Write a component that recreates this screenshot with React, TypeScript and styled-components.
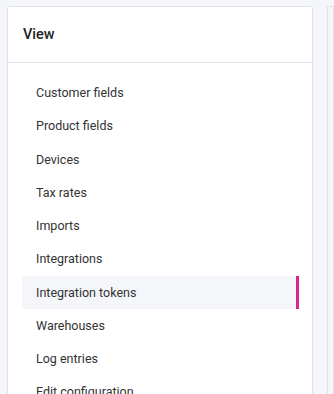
import React from "react";
import styled, { createGlobalStyle } from "styled-components";

const Global = createGlobalStyle`
  html, body { margin: 0; padding: 0; background: #f5f6fa; }
  body { font-family: Roboto, "Noto Sans", sans-serif; color: #333; }
  * { box-sizing: border-box; }
`;

const Page = styled.div`
  display: flex;
  gap: 14px;
  padding: 6px 0 0 7px;
  height: 394px;
  overflow: hidden;
`;

const Card = styled.div`
  width: 306px;
  flex: none;
  background: #fff;
  border: 1px solid #e3e4e8;
  border-radius: 2px;
  height: 420px;
`;

const SideCard = styled.div`
  flex: 1;
  background: #f5f6fa;
  border: 1px solid #e3e4e8;
  height: 420px;
`;

const Header = styled.div`
  height: 56px;
  display: flex;
  align-items: center;
  padding: 0 15px;
  border-bottom: 1px solid #e3e4e8;
  font-size: 14.5px;
  font-weight: 500;
  color: #222;
`;

const List = styled.ul`
  list-style: none;
  margin: 0;
  padding: 13px 13px 0 14px;
`;

const Item = styled.li<{ $active?: boolean }>`
  height: 33.25px;
  display: flex;
  align-items: center;
  padding-left: 14px;
  font-size: 12.5px;
  color: #333;
  background: ${(p) => (p.$active ? "#f5f6fa" : "transparent")};
  border-right: 3px solid ${(p) => (p.$active ? "#dd2590" : "transparent")};
`;

const items = [
  "Customer fields",
  "Product fields",
  "Devices",
  "Tax rates",
  "Imports",
  "Integrations",
  "Integration tokens",
  "Warehouses",
  "Log entries",
  "Edit configuration",
];

export default function App() {
  return (
    <>
      <Global />
      <Page>
        <Card>
          <Header>View</Header>
          <List>
            {items.map((t) => (
              <Item key={t} $active={t === "Integration tokens"}>
                {t}
              </Item>
            ))}
          </List>
        </Card>
        <SideCard />
      </Page>
    </>
  );
}
